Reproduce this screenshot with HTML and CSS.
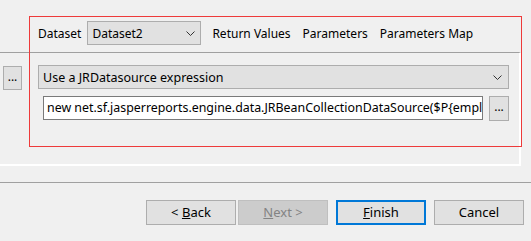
FILE: index.html
```html
<!DOCTYPE html>
<html lang="en">
<head>
  <meta charset="UTF-8" />
  <title>Dataset</title>
  <link rel="stylesheet" href="styles.css">
</head>
<body>

  <div class="header">
    <span class="label">Dataset</span>
    <div class="combo combo-small">
      <span>Dataset2</span>
      <svg class="chev" width="9" height="5" viewBox="0 0 9 5"><path d="M0.5 0.5 L4.5 4.5 L8.5 0.5" fill="none" stroke="#333" stroke-width="1"/></svg>
    </div>
    <span class="tab first">Return Values</span>
    <span class="tab">Parameters</span>
    <span class="tab">Parameters Map</span>
  </div>

  <div class="panel">
    <button class="dots side">...</button>
    <div class="main">
      <div class="combo combo-wide">
        <span>Use a JRDatasource expression</span>
        <svg class="chev" width="9" height="5" viewBox="0 0 9 5"><path d="M0.5 0.5 L4.5 4.5 L8.5 0.5" fill="none" stroke="#333" stroke-width="1"/></svg>
      </div>
      <div class="expr-row">
        <div class="field"><span class="field-text">new net.sf.jasperreports.engine.data.JRBeanCollectionDataSource($P{employees})</span></div>
        <button class="dots">...</button>
      </div>
    </div>
  </div>

  <div class="separator"></div>

  <div class="buttons">
    <button class="btn">&lt; <u>B</u>ack</button>
    <button class="btn disabled"><u>N</u>ext &gt;</button>
    <button class="btn default"><u>F</u>inish</button>
    <button class="btn">Cancel</button>
  </div>

  <div class="highlight"></div>

</body>
</html>
```

FILE: styles.css
```css
body {
  margin: 0;
  width: 531px;
  height: 241px;
  overflow: hidden;
  background: #f0f0f0;
  font-family: "Noto Sans", "Liberation Sans", sans-serif;
  font-size: 12px;
  color: #000;
  position: relative;
}

.header {
  height: 52px;
  display: flex;
  align-items: center;
  padding: 14px 0 0 38px;
  box-sizing: border-box;
}

.label {
  margin-right: 6px;
}

.combo {
  box-sizing: border-box;
  height: 24px;
  background: #e1e1e1;
  border: 1px solid #adadad;
  display: flex;
  align-items: center;
  justify-content: space-between;
  padding: 0 5px 0 4px;
}

.combo-small {
  width: 114px;
}

.combo-wide {
  width: 471px;
  font-size: 12.5px;
  padding-left: 4px;
  padding-right: 6px;
}

.tab {
  margin-left: 12px;
}

.tab.first {
  margin-left: 11px;
}

.panel {
  width: 521px;
  height: 114px;
  box-sizing: border-box;
  border-top: 1px solid #a0a0a0;
  border-right: 2px solid #fff;
  border-bottom: 2px solid #fff;
  display: flex;
  align-items: flex-start;
  padding-top: 12px;
}

.dots {
  box-sizing: border-box;
  width: 20px;
  height: 25px;
  background: #e1e1e1;
  border: 1px solid #adadad;
  font-family: inherit;
  font-size: 12px;
  padding: 0 0 4px;
  margin: 0;
}

.dots.side {
  margin-left: 3px;
  margin-top: 1px;
  width: 19px;
  height: 24px;
}

.main {
  margin-left: 16px;
  width: 471px;
}

.expr-row {
  display: flex;
  margin-top: 7px;
  padding-left: 5px;
  gap: 6px;
}

.field {
  box-sizing: border-box;
  width: 440px;
  height: 24px;
  background: #fff;
  border: 1px solid #7a7a7a;
  padding: 0 3px;
  line-height: 21px;
  font-size: 12.4px;
  white-space: nowrap;
  overflow: hidden;
}

.separator {
  margin-top: 16px;
  border-top: 1px solid #a0a0a0;
}

.buttons {
  display: flex;
  justify-content: flex-end;
  padding: 17px 7px 0 0;
}

.btn {
  box-sizing: border-box;
  width: 90px;
  height: 25px;
  margin-left: 8px;
  background: #e1e1e1;
  border: 1px solid #adadad;
  font-family: inherit;
  font-size: 13px;
  color: #000;
  padding: 0 0 1px;
}

.btn.disabled {
  margin-left: 2px;
  background: #cccccc;
  border-color: #bfbfbf;
  color: #838383;
}

.btn.default {
  border: 2px solid #0078d7;
}

.highlight {
  position: absolute;
  left: 29px;
  top: 16px;
  width: 493px;
  height: 131px;
  box-sizing: border-box;
  border: 1px solid #ee3a3a;
  pointer-events: none;
}
```
